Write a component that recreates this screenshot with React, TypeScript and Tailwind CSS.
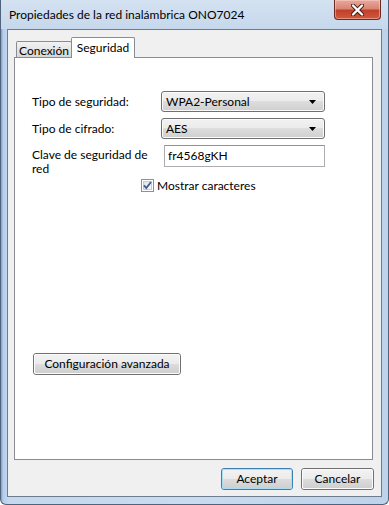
import React from "react";

function Win7Button({ label, w, def }: { label: string; w: string; def?: boolean }) {
  return (
    <div
      className={`${w} h-[22px] rounded-[3px] border ${def ? "border-[#3c7fb1]" : "border-[#707070]"}`}
    >
      <div
        className={`h-full w-full rounded-[2px] border ${def ? "border-[#a9dcf5]" : "border-[#fbfbfb]"} flex items-center justify-center bg-[linear-gradient(#f2f2f2_0%,#ebebeb_49%,#dddddd_50%,#cfcfcf_100%)]`}
      >
        <span className="leading-none">{label}</span>
      </div>
    </div>
  );
}

function Combo({ text }: { text: string }) {
  return (
    <div className="w-[164px] h-[21px] rounded-[3px] border border-[#707070] flex items-center pl-[4px] pr-[4px] bg-[linear-gradient(#f2f2f2_0%,#ebebeb_49%,#dddddd_50%,#cfcfcf_100%)] shadow-[inset_0_0_0_1px_#fbfbfb]">
      <span className="flex-1 leading-none">{text}</span>
      <svg width="7" height="4" viewBox="0 0 7 4" className="mr-[4px]">
        <path d="M0 0h7L3.5 4z" fill="#000" />
      </svg>
    </div>
  );
}

export default function App() {
  return (
    <div className="w-[389px] h-[505px] flex flex-col font-['Lato','Segoe_UI',sans-serif] text-[12px] text-black bg-[linear-gradient(90deg,#7f9cc4_0px,#b3cdea_2px,#c4d8ee_7px,#c9dbef_50%,#bdd3ea_100%)] border-l border-r border-b border-[#4f637d] rounded-b-[6px] overflow-hidden">
      {/* Title bar */}
      <div className="h-[29px] flex items-start bg-[linear-gradient(#d4e2f1,#c6d8ec)] -mx-px px-px">
        <div className="pl-[8px] pt-[7px] leading-[15px] text-[12px]">
          Propiedades de la red inalámbrica ONO7024
        </div>
        <div className="ml-auto mr-[7px] w-[47px] h-[20px] rounded-b-[4px] border border-t-0 border-[#6b2b22] bg-[linear-gradient(#e9a99c_0%,#d98575_45%,#c2402a_55%,#cf5a3f_100%)] flex items-center justify-center shadow-[inset_0_0_0_1px_rgba(255,220,210,0.45)]">
          <svg width="13" height="12" viewBox="0 0 13 12">
            <path
              d="M2 1.5L11 10.5M11 1.5L2 10.5"
              stroke="#4a1a12"
              strokeWidth="4.2"
              strokeLinecap="round"
            />
            <path
              d="M2 1.5L11 10.5M11 1.5L2 10.5"
              stroke="#ffffff"
              strokeWidth="2.4"
              strokeLinecap="round"
            />
          </svg>
        </div>
      </div>

      {/* Client area */}
      <div className="mx-[6px] mb-[7px] flex-1 border border-[#6e7c8e] bg-[#f0f0f0] flex flex-col">
        {/* Tabs */}
        <div className="mt-[7px] h-[20px] pl-[8px] flex items-end">
          <div className="w-[56px] h-[16px] border border-b-0 border-[#898c95] rounded-t-[2px] bg-[linear-gradient(#f2f2f2,#e6e6e6_50%,#d6d6d6)] flex items-center justify-center">
            <span className="leading-none pt-[2px]">Conexión</span>
          </div>
          <div className="-ml-px w-[64px] h-[21px] -mb-px relative z-10 border border-b-0 border-[#898c95] rounded-t-[2px] bg-white flex items-start justify-center pt-[3px]">
            <span className="leading-[14px]">Seguridad</span>
          </div>
        </div>

        {/* Panel */}
        <div className="ml-[6px] mr-[8px] h-[403px] border border-[#898c95] bg-white flex flex-col pl-[17px] pt-[33px]">
          <div className="flex items-center">
            <div className="w-[129px]">Tipo de seguridad:</div>
            <Combo text="WPA2-Personal" />
          </div>
          <div className="flex items-center mt-[6px]">
            <div className="w-[129px]">Tipo de cifrado:</div>
            <Combo text="AES" />
          </div>
          <div className="flex items-start mt-[6px] h-[22px]">
            <div className="w-[132px] pt-[3px] flex flex-col">
              <div className="h-[14px] leading-[14px]">Clave de seguridad de</div>
              <div className="h-[14px] leading-[14px]">red</div>
            </div>
            <div className="w-[161px] h-[22px] border border-[#abadb3] border-t-[#8f949b] flex items-center pl-[3px] bg-white">
              <span className="leading-none">fr4568gKH</span>
            </div>
          </div>
          <div className="flex items-center mt-[12px] ml-[109px] h-[13px]">
            <svg width="13" height="13" viewBox="0 0 13 13">
              <defs>
                <linearGradient id="cbg" x1="0" y1="0" x2="1" y2="1">
                  <stop offset="0" stopColor="#dde3ea" />
                  <stop offset="1" stopColor="#f7f9fb" />
                </linearGradient>
              </defs>
              <rect x="0.5" y="0.5" width="12" height="12" fill="#fff" stroke="#8e8f8f" />
              <rect x="2.5" y="2.5" width="8" height="8" fill="url(#cbg)" stroke="#c7ccd4" />
              <path d="M3 6.3L5.3 9L10 3" stroke="#405c8f" strokeWidth="1.8" fill="none" />
            </svg>
            <span className="ml-[3px] leading-none">Mostrar caracteres</span>
          </div>
          <div className="mt-[161px] ml-[1px]">
            <Win7Button label="Configuración avanzada" w="w-[148px]" />
          </div>
        </div>

        {/* Bottom buttons */}
        <div className="flex justify-end gap-[8px] pr-[7px] mt-[8px]">
          <Win7Button label="Aceptar" w="w-[72px]" def />
          <Win7Button label="Cancelar" w="w-[73px]" />
        </div>
      </div>
    </div>
  );
}
